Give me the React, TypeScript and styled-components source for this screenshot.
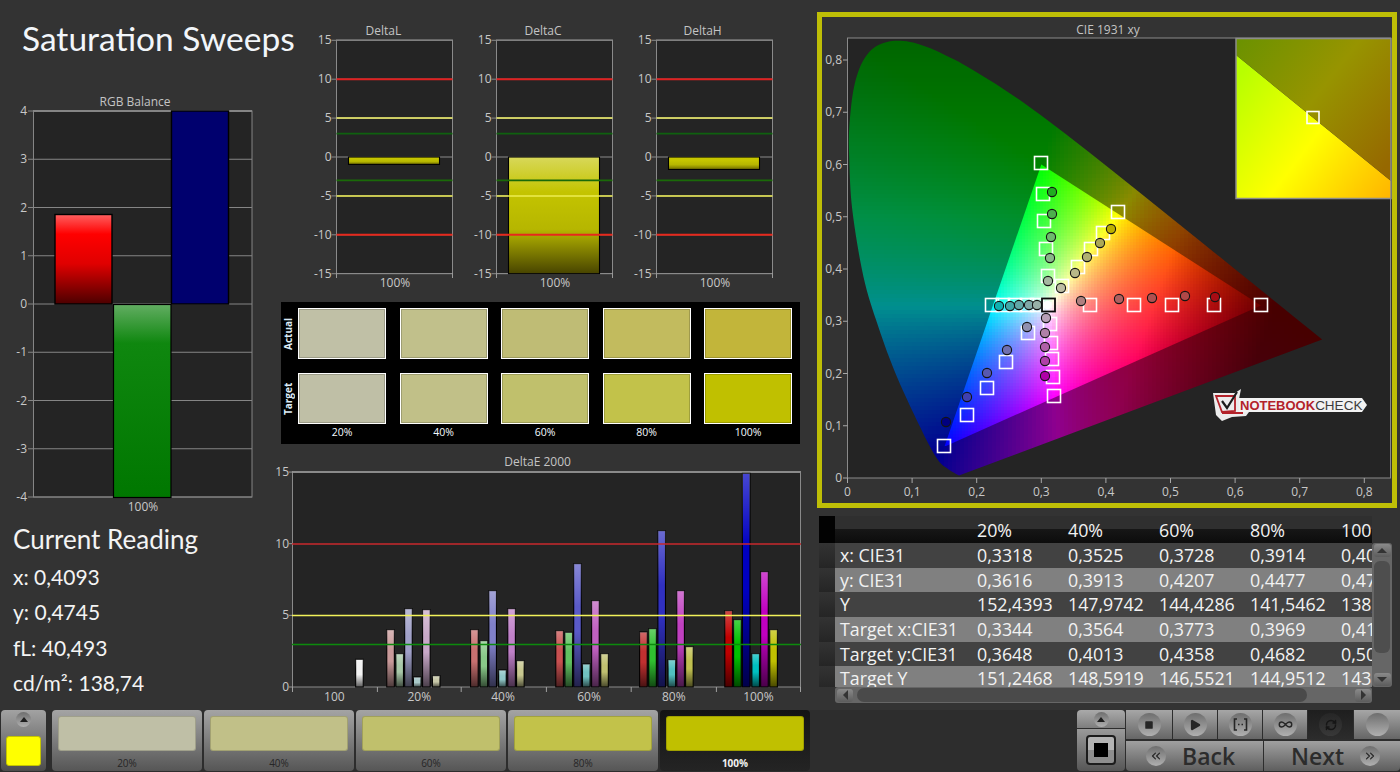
import React from 'react'
import styled, { createGlobalStyle } from 'styled-components'
import { ChevronsLeft, ChevronsRight, Infinity as InfinityIcon, Play, RefreshCw, Square } from 'lucide-react'

const GlobalStyle = createGlobalStyle`
  html, body {
    margin: 0;
    padding: 0;
    background: #333;
  }
  * {
    box-sizing: border-box;
  }
`

const Page = styled.div`
  width: 1400px;
  height: 772px;
  overflow: hidden;
  display: flex;
  flex-direction: column;
  background: #333;
  font-family: "Open Sans", "Liberation Sans", sans-serif;
`

const Main = styled.div`
  height: 710px;
  display: grid;
  grid-template-columns: 281px 536px 583px;
`

const LeftColumn = styled.div`
  display: flex;
  flex-direction: column;
`

const Title = styled.h1`
  margin: 18px 0 0 22px;
  height: 74px;
  font: 400 33.5px/40px Lato, "Liberation Sans", sans-serif;
  color: #f2f6fa;
  white-space: nowrap;
`

const ChartSvg = styled.svg<{ $w: number; $h: number }>`
  display: block;
  flex: none;
  overflow: visible;
  width: ${p => p.$w}px;
  height: ${p => p.$h}px;
`

const ChartTitle = styled.text`
  font: 12px "Open Sans", sans-serif;
  fill: #c4c4c4;
  text-anchor: middle;
`

const AxisLabel = styled.text<{ $end?: boolean }>`
  font: 12px "Open Sans", sans-serif;
  fill: #c8c8c8;
  text-anchor: ${p => (p.$end ? 'end' : 'middle')};
`

const Reading = styled.div`
  margin: 5px 0 0 13px;
  color: #f4f4f4;
  font: 400 21px/35.4px Lato, sans-serif;
`

const ReadingTitle = styled.div`
  font-size: 26px;
  line-height: 34px;
  margin-bottom: 3px;
`

const MidColumn = styled.div`
  display: flex;
  flex-direction: column;
  padding-top: 20px;
`

const DeltaRow = styled.div`
  display: flex;
  padding-left: 19px;
  height: 282px;
`

const SwatchPanel = styled.div`
  display: flex;
  width: 519px;
  height: 142px;
  background: #000;
  padding-top: 6px;
`

const SwatchLabels = styled.div`
  width: 17px;
  display: flex;
  flex-direction: column;
  gap: 14px;
`

const RowLabel = styled.div`
  width: 14px;
  height: 51px;
  writing-mode: vertical-rl;
  transform: rotate(180deg);
  text-align: center;
  line-height: 14px;
  font-size: 10px;
  font-weight: 700;
  color: #dcecf8;
`

const SwatchGrid = styled.div`
  display: grid;
  grid-template-columns: repeat(5, 88px);
  grid-template-rows: 51px 51px auto;
  column-gap: 13.5px;
  row-gap: 14px;
`

const Swatch = styled.div<{ $color: string }>`
  background: ${p => p.$color};
  border: 1px solid #fff;
  box-shadow: inset 0 0 0 1px rgba(0, 0, 0, 0.18);
`

const SwatchCaption = styled.div`
  margin-top: -13px;
  text-align: center;
  color: #f4fbff;
  font-size: 10.5px;
  font-weight: 400;
  line-height: 14px;
`

const DeltaEWrap = styled.div`
  margin-top: 8px;
`

const RightColumn = styled.div`
  display: flex;
  flex-direction: column;
  padding-top: 12px;
`

const CieFrame = styled.div`
  width: 580px;
  height: 496px;
  border: 5px solid #bebe06;
  background: #333;
`

const TableWrap = styled.div`
  margin: 8px 0 0 2px;
  display: grid;
  grid-template-columns: 553px 20px;
  grid-template-rows: 171px 16px;
  width: 573px;
`

const DataTable = styled.div`
  overflow: hidden;
  color: #f2f2f2;
  font: 400 17.8px/24.7px "Open Sans", sans-serif;
`

const Row = styled.div<{ $tone: 'head' | 'dark' | 'light' }>`
  display: grid;
  grid-template-columns: 16px 137px repeat(4, 91px) 36px;
  height: ${p => (p.$tone === 'head' ? 27 : 24.7)}px;
  background: ${p =>
    p.$tone === 'head'
      ? 'linear-gradient(#2f2f2f 0 50%, #161616 50%, #0c0c0c 100%)'
      : p.$tone === 'dark'
      ? '#424242'
      : '#808080'};
  line-height: ${p => (p.$tone === 'head' ? '29px' : 'inherit')};
`

const RowHeader = styled.div<{ $head?: boolean }>`
  background: ${p => (p.$head ? '#020202' : 'linear-gradient(#333, #252525)')};
`

const Cell = styled.div`
  padding-left: 5px;
  white-space: nowrap;
  overflow: hidden;
`

const VScroll = styled.div`
  margin-top: 27px;
  background: #666;
  border-radius: 3px;
  display: flex;
  flex-direction: column;
  align-items: center;
  padding: 1px 0;
`

const HScroll = styled.div`
  grid-column: 1;
  margin-left: 16px;
  background: #666;
  border-radius: 3px;
  display: flex;
  align-items: center;
  padding: 0 1px 0 2px;
`

const ScrollButton = styled.div<{ $dir: 'up' | 'down' | 'left' | 'right' }>`
  flex: none;
  width: ${p => (p.$dir === 'up' || p.$dir === 'down' ? '17px' : '16px')};
  height: 13px;
  border-radius: 3px;
  background: linear-gradient(#8a8a8a, #5c5c5c);
  display: flex;
  align-items: center;
  justify-content: center;
  &::after {
    content: '';
    width: 0;
    height: 0;
    border: 5px solid transparent;
    ${p =>
      p.$dir === 'up'
        ? 'border-top: 0; border-bottom-color: #333;'
        : p.$dir === 'down'
        ? 'border-bottom: 0; border-top-color: #333;'
        : p.$dir === 'left'
        ? 'border-left: 0; border-right-color: #333;'
        : 'border-right: 0; border-left-color: #333;'}
  }
`

const ScrollThumbV = styled.div`
  width: 16px;
  height: 92px;
  margin: 4px 0 auto;
  background: #4e4e4e;
  border-radius: 6px;
`

const ScrollThumbH = styled.div`
  width: 450px;
  height: 14px;
  margin: 0 auto 0 4px;
  background: #4a4a4a;
  border-radius: 7px;
`

const BottomBar = styled.div`
  height: 62px;
  display: flex;
  padding: 0 0 1px 1px;
  background: #2d2d2d;
`

const SideButton = styled.div`
  width: 45px;
  margin-right: 6px;
  border-radius: 4px;
  background: linear-gradient(#a2a2a2, #4c4c4c);
  display: flex;
  flex-direction: column;
  align-items: center;
  padding-top: 2px;
`

const RoundIcon = styled.div<{ $size?: number; $dark?: boolean }>`
  flex: none;
  width: ${p => p.$size ?? 23}px;
  height: ${p => p.$size ?? 23}px;
  border-radius: 50%;
  color: ${p => (p.$dark ? '#161616' : '#262626')};
  background: ${p =>
    p.$dark ? 'linear-gradient(#262626, #383838)' : 'linear-gradient(#6e6e6e, #b0b0b0)'};
  display: flex;
  align-items: center;
  justify-content: center;
`

const UpArrow = styled.div`
  width: 0;
  height: 0;
  border: 4.5px solid transparent;
  border-top: 0;
  border-bottom: 5px solid #1e1e1e;
`

const ColorChip = styled.div`
  width: 35px;
  height: 30px;
  margin-top: auto;
  margin-bottom: 5px;
  background: #ffff00;
  border-radius: 3px;
  border: 1px solid #c4c400;
`

const Tabs = styled.div`
  display: flex;
  gap: 2px;
`

const Tab = styled.div<{ $active?: boolean }>`
  width: 150px;
  padding: 6px 6px 0;
  border-radius: 4px;
  background: ${p => (p.$active ? 'linear-gradient(#141414, #242424)' : 'linear-gradient(#a4a4a4, #565656)')};
  display: flex;
  flex-direction: column;
`

const TabColor = styled.div<{ $color: string }>`
  height: 35px;
  border-radius: 3px;
  background: ${p => p.$color};
  border: 1px solid rgba(0, 0, 0, 0.16);
`

const TabLabel = styled.div<{ $active?: boolean }>`
  margin-top: 5px;
  text-align: center;
  font-size: 10px;
  line-height: 14px;
  font-weight: ${p => (p.$active ? 700 : 400)};
  color: ${p => (p.$active ? '#f2f2f2' : '#262626')};
`

const Controls = styled.div`
  margin-left: auto;
  display: flex;
  gap: 1px;
`

const StopStack = styled.div`
  width: 48px;
  display: flex;
  flex-direction: column;
  gap: 1px;
`

const StopTop = styled.div`
  height: 18px;
  border-radius: 4px 4px 0 0;
  background: linear-gradient(#aaa, #7e7e7e);
  display: flex;
  align-items: center;
  justify-content: center;
`

const StopBottom = styled.div`
  flex: 1;
  border-radius: 0 0 4px 4px;
  background: linear-gradient(#9a9a9a, #565656);
  display: flex;
  align-items: center;
  justify-content: center;
`

const BigStop = styled.div`
  width: 30px;
  height: 30px;
  border: 2px solid #1c1c1c;
  border-radius: 4px;
  background: linear-gradient(#b4b4b4 0 50%, #8e8e8e 50%);
  display: flex;
  align-items: center;
  justify-content: center;
  &::after {
    content: '';
    width: 14px;
    height: 14px;
    background: #000;
  }
`

const ButtonStack = styled.div`
  width: 274px;
  display: flex;
  flex-direction: column;
  gap: 2px;
`

const ToolRow = styled.div`
  height: 29px;
  display: flex;
  gap: 1px;
`

const ToolButton = styled.div<{ $on?: boolean; $w: number }>`
  width: ${p => p.$w}px;
  background: ${p => (p.$on ? 'linear-gradient(#1e1e1e, #2c2c2c)' : 'linear-gradient(#a6a6a6, #666)')};
  display: flex;
  align-items: center;
  justify-content: center;
`

const NavRow = styled.div`
  flex: 1;
  display: flex;
  gap: 1px;
`

const NavButton = styled.div<{ $next?: boolean }>`
  flex: 1;
  display: flex;
  align-items: center;
  flex-direction: ${p => (p.$next ? 'row-reverse' : 'row')};
  gap: 16px;
  padding: 0 20px;
  border-radius: ${p => (p.$next ? '0 0 4px 0' : '0 0 0 4px')};
  background: linear-gradient(#a0a0a0, #5e5e5e);
  color: #2c2c2c;
  font: 600 23px/30px "Open Sans", sans-serif;
`

// CIE xy plot scale, page pixels
const cx = (x: number) => 847.5 + 646 * x
const cy = (y: number) => 478 - 522.5 * y

// the plotted horseshoe is smoother than the tabulated locus on its left side, so it is traced from the picture
const LEFT_EDGE = [
  [959, 475.5], [948, 469], [938, 460], [923, 433], [897, 377], [878.4, 327], [863.5, 277], [852.3, 210],
  [849.3, 160], [849.3, 127], [854, 87], [863.5, 60], [878.4, 45], [900.8, 40.7], [927, 47], [960.5, 62.5],
]

const smooth = (pts: number[][]) => {
  const out: number[][] = []
  for (let i = 0; i < pts.length - 1; i++) {
    const a = pts[Math.max(i - 1, 0)]
    const b = pts[i]
    const c = pts[i + 1]
    const d = pts[Math.min(i + 2, pts.length - 1)]
    for (let t = 0; t < 1; t += 0.125) {
      const s = t * t
      const u = s * t
      const at = (k: number) =>
        0.5 * (2 * b[k] + (c[k] - a[k]) * t + (2 * a[k] - 5 * b[k] + 4 * c[k] - d[k]) * s + (3 * b[k] - a[k] - 3 * c[k] + d[k]) * u)
      out.push([(at(0) - 847.5) / 646, (478 - at(1)) / 522.5])
    }
  }
  return out
}

const LOCUS = [
  ...smooth(LEFT_EDGE),
  [0.1929, 0.7816], [0.2296, 0.7543], [0.2658, 0.7243],
  [0.3016, 0.6923], [0.3373, 0.6589], [0.3731, 0.6245], [0.4087, 0.5896], [0.4441, 0.5547], [0.4788, 0.5202],
  [0.5125, 0.4866], [0.5448, 0.4544], [0.5752, 0.4242], [0.6029, 0.3965], [0.627, 0.3725], [0.6658, 0.334],
  [0.6915, 0.3083], [0.7079, 0.292], [0.719, 0.2809], [0.73, 0.27], [0.7347, 0.2653],
]
const PRIMARIES = [[0.64, 0.33], [0.3, 0.6], [0.15, 0.06]]

const insidePoly = (x: number, y: number, poly: number[][]) => {
  let hit = false
  for (let i = 0, j = poly.length - 1; i < poly.length; j = i++) {
    const [xi, yi] = poly[i]
    const [xj, yj] = poly[j]
    if (yi > y !== yj > y && x < ((xj - xi) * (y - yi)) / (yj - yi) + xi) hit = !hit
  }
  return hit
}

const redShare = (x: number, y: number) => {
  const [[x1, y1], [x2, y2], [x3, y3]] = PRIMARIES
  return ((y2 - y3) * (x - x3) + (x3 - x2) * (y - y3)) / ((y2 - y3) * (x1 - x3) + (x3 - x2) * (y1 - y3))
}

const xyColor = (x: number, y: number, dim: number, gamma: number, fall: number) => {
  const X = x / y
  const Z = (1 - x - y) / y
  const lin = [
    3.2406 * X - 1.5372 - 0.4986 * Z,
    -0.9689 * X + 1.8758 + 0.0415 * Z,
    0.0557 * X - 0.204 + 1.057 * Z,
  ].map(v => Math.max(v, 0))
  const top = Math.max(...lin)
  const fade = 1 - fall * Math.min(1, Math.max(0, (redShare(x, y) - 0.6) / 0.45))
  const [r, g, b] = lin.map(v => Math.round(255 * Math.pow(v / top, 1 / gamma) * dim * fade))
  return `rgb(${r},${g},${b})`
}

const buildCells = (
  step: number,
  test: (x: number, y: number) => boolean,
  color: (x: number, y: number) => string
) => {
  const cells: { x: number; y: number; fill: string }[] = []
  for (let py = 38; py < 478; py += step) {
    for (let px = 848; px < 1325; px += step) {
      const x = (px + step / 2 - 847.5) / 646
      const y = (478 - py - step / 2) / 522.5
      if (y > 0.002 && test(x, y)) cells.push({ x: px, y: py, fill: color(x, y) })
    }
  }
  return cells
}

const near = (poly: number[][]) => (x: number, y: number) => {
  const d = 0.012
  return (
    insidePoly(x, y, poly) ||
    insidePoly(x + d, y, poly) ||
    insidePoly(x - d, y, poly) ||
    insidePoly(x, y + d, poly) ||
    insidePoly(x, y - d, poly)
  )
}

// the part outside the gamut gets darker towards the top of the horseshoe
const outerDim = (y: number) => 0.56 - 0.16 * Math.min(1, Math.max(0, (y - 0.5) / 0.33))

const outerCells = buildCells(4, near(LOCUS), (x, y) => xyColor(x, y, outerDim(y), 1.2, 0.5))
const innerCells = buildCells(3, near(PRIMARIES), (x, y) => xyColor(x, y, 1, 1.1, 0.65))

const toPoints = (poly: number[][]) => poly.map(([x, y]) => `${cx(x)},${cy(y)}`).join(' ')

const SQUARES = [
  [1041, 163], [1043, 194], [1044, 221], [1046, 249], [1048, 276],
  [1118, 212], [1103, 233], [1091, 249], [1078, 267], [1062, 286],
  [1261, 305], [1214, 305], [1172, 305], [1134, 305], [1090, 305],
  [992, 305], [1003, 305], [1015, 305], [1027, 305], [1037, 305],
  [944, 446], [967, 415], [987, 388], [1006, 362], [1028, 333],
  [1054, 396], [1053, 377], [1052, 359], [1051, 343], [1050, 324],
]

const DOTS: [number, number, string][] = [
  [1052, 192, '#1fae1f'], [1052, 214, '#4cb04c'], [1051, 237, '#6db86d'], [1050, 258, '#8ab88a'], [1048, 281, '#a4b8a0'],
  [1111, 229, '#bdb000'], [1100, 243, '#aca856'], [1087, 257, '#b0b070'], [1075, 273, '#b8b888'], [1061, 288, '#bebea4'],
  [1215, 297, '#a80c14'], [1185, 296, '#b04848'], [1152, 298, '#b05050'], [1119, 299, '#b06060'], [1081, 301, '#b08080'],
  [999, 306, '#10b0b0'], [1010, 306, '#40a8a8'], [1019, 305, '#60a8a8'], [1029, 305, '#80a8a8'], [1037, 305, '#98b0a8'],
  [946, 422, '#000080'], [967, 397, '#4040b0'], [987, 373, '#5858b0'], [1007, 350, '#7070b0'], [1027, 327, '#9090b0'],
  [1045, 376, '#b000a8'], [1045, 361, '#b040a8'], [1045, 347, '#b060a8'], [1045, 333, '#b080a8'], [1046, 318, '#b8a0b8'],
]

const LogoWord = styled.text`
  font: 700 13px "Liberation Sans", sans-serif;
`

const LogoTail = styled.tspan`
  font-weight: 400;
  font-size: 13.5px;
`

const Logo = () => (
  <g>
    <polygon points="1236,398 1362,398 1367,405 1362,412 1236,412" fill="#f2f2f2" />
    <polygon points="1213,393 1235,393 1241,389 1239,399 1239,412 1249,412 1246,416 1232,417 1222,421 1216,415" fill="#ececec" />
    <path d="M1216 396 H1235 V411 L1222 412 Z M1222 413 L1243 413" fill="none" stroke="#b3222a" strokeWidth={1.8} />
    <path d="M1222 401 L1227 408 L1237 392" fill="none" stroke="#1c1c1c" strokeWidth={2.2} />
    <LogoWord x={1240} y={409.6} fill="#b3222a">
      NOTEBOOK<LogoTail fill="#3c3c3c">CHECK</LogoTail>
    </LogoWord>
  </g>
)

const CieChart = () => (
  <ChartSvg $w={570} $h={486} viewBox="822 17 570 486">
    <defs>
      <clipPath id="locusClip">
        <polygon points={toPoints(LOCUS)} />
      </clipPath>
      <clipPath id="gamutClip">
        <polygon points={toPoints(PRIMARIES)} />
      </clipPath>
      <clipPath id="insetLow">
        <polygon points="1236,55 1391,181 1391,198 1236,198" />
      </clipPath>
      <clipPath id="insetHigh">
        <polygon points="1236,39 1391,39 1391,181 1236,55" />
      </clipPath>
      <linearGradient id="insetBright" gradientUnits="userSpaceOnUse" x1="1236" y1="80" x2="1391" y2="198">
        <stop offset="0" stopColor="#b8ff00" />
        <stop offset="0.5" stopColor="#ffff00" />
        <stop offset="1" stopColor="#ffb400" />
      </linearGradient>
      <linearGradient id="insetDim" gradientUnits="userSpaceOnUse" x1="1236" y1="39" x2="1391" y2="160">
        <stop offset="0" stopColor="#6a9200" />
        <stop offset="0.5" stopColor="#979400" />
        <stop offset="1" stopColor="#966800" />
      </linearGradient>
    </defs>
    <ChartTitle x={1108} y={34}>CIE 1931 xy</ChartTitle>
    <rect x={847.5} y={38} width={543} height={440} fill="#242424" stroke="#8a8a8a" strokeWidth={1} />
    <g clipPath="url(#locusClip)" shapeRendering="crispEdges">
      {outerCells.map(c => (
        <rect key={`o${c.x}-${c.y}`} x={c.x} y={c.y} width={4} height={4} fill={c.fill} />
      ))}
    </g>
    <g clipPath="url(#gamutClip)" shapeRendering="crispEdges">
      {innerCells.map(c => (
        <rect key={`i${c.x}-${c.y}`} x={c.x} y={c.y} width={3} height={3} fill={c.fill} />
      ))}
    </g>
    {[0, 0.1, 0.2, 0.3, 0.4, 0.5, 0.6, 0.7, 0.8].map(v => {
      const label = v === 0 ? '0' : v.toFixed(1).replace('.', ',')
      return (
        <g key={v}>
          <line x1={843} x2={847.5} y1={cy(v)} y2={cy(v)} stroke="#a8a8a8" />
          <line x1={cx(v)} x2={cx(v)} y1={478} y2={483} stroke="#a8a8a8" />
          <AxisLabel $end x={842} y={cy(v) + 4}>{label}</AxisLabel>
          <AxisLabel x={cx(v)} y={496}>{label}</AxisLabel>
        </g>
      )
    })}
    {SQUARES.map(([x, y]) => (
      <rect key={`${x}-${y}`} x={x - 6.5} y={y - 6.5} width={13} height={13} fill="none" stroke="#fff" strokeWidth={1.6} />
    ))}
    {DOTS.map(([x, y, fill]) => (
      <circle key={`${x}-${y}`} cx={x} cy={y} r={4.6} fill={fill} stroke="#141414" strokeWidth={1.1} />
    ))}
    <circle cx={1047.5} cy={305} r={4.2} fill="#fff" />
    <rect x={1042} y={298.5} width={13} height={13} fill="none" stroke="#0c0c0c" strokeWidth={1.8} />

    <rect x={1236} y={38.5} width={155} height={160} fill="#333" />
    <rect x={1236} y={39} width={155} height={159} fill="url(#insetBright)" clipPath="url(#insetLow)" />
    <rect x={1236} y={39} width={155} height={159} fill="url(#insetDim)" clipPath="url(#insetHigh)" />
    <rect x={1236} y={38.5} width={155} height={160} fill="none" stroke="#8c8c8c" strokeWidth={1.5} />
    <rect x={1307} y={111.5} width={12} height={12} fill="none" stroke="#fff" strokeWidth={1.6} />

    <Logo />
  </ChartSvg>
)

const RgbChart = () => (
  <ChartSvg $w={281} $h={425} viewBox="0 92 281 425">
    <defs>
      <linearGradient id="rgbRed" x1="0" x2="0" y1="0" y2="1">
        <stop offset="0" stopColor="#ff6060" />
        <stop offset="0.22" stopColor="#ff0000" />
        <stop offset="0.55" stopColor="#e00000" />
        <stop offset="1" stopColor="#4c0000" />
      </linearGradient>
      <linearGradient id="rgbGreen" x1="0" x2="0" y1="0" y2="1">
        <stop offset="0" stopColor="#62ad62" />
        <stop offset="0.2" stopColor="#0f870f" />
        <stop offset="1" stopColor="#007700" />
      </linearGradient>
    </defs>
    <ChartTitle x={135} y={106}>RGB Balance</ChartTitle>
    <rect x={33.5} y={111} width={218.5} height={386} fill="#242424" stroke="#858585" />
    <line x1={33} x2={252} y1={111} y2={111} stroke="#858585" strokeWidth={2} />
    {[4, 3, 2, 1, 0, -1, -2, -3, -4].map(v => {
      const y = 304 - v * 48.25
      return (
        <g key={v}>
          <line x1={28} x2={252} y1={y} y2={y} stroke="#858585" />
          <AxisLabel $end x={27} y={y + 4}>{v}</AxisLabel>
        </g>
      )
    })}
    <rect x={55} y={214.5} width={57} height={89.5} fill="url(#rgbRed)" stroke="#000" strokeWidth={1.4} />
    <rect x={171.5} y={111} width={57} height={193} fill="#00006e" stroke="#000" strokeWidth={1.4} />
    <rect x={113.5} y={304.5} width={57.5} height={193} fill="url(#rgbGreen)" stroke="#000" strokeWidth={1.2} />
    <AxisLabel x={143} y={511}>100%</AxisLabel>
  </ChartSvg>
)

const DeltaChart = ({ name, origin, titleX, bar }: { name: string; origin: number; titleX: number; bar: number }) => {
  const left = origin + 36.5
  const right = origin + 152.5
  const at = (v: number) => 157 - v * 7.78
  const limits: [number, string, number][] = [
    [10, '#e02020', 2],
    [5, '#f4f46a', 1.5],
    [3, '#0f610f', 1.6],
    [-3, '#1a6a08', 1.6],
    [-5, '#ecec50', 1.5],
    [-10, '#e6281c', 2],
  ]
  return (
    <ChartSvg $w={160} $h={273} viewBox={`${origin} 20 160 273`}>
      <ChartTitle x={titleX} y={35}>{name}</ChartTitle>
      <rect x={left} y={40} width={116} height={233.5} fill="#242424" stroke="#8a8a8a" />
      {[15, 10, 5, 0, -5, -10, -15].map(v => (
        <g key={v}>
          <line x1={left - 5} x2={right} y1={at(v)} y2={at(v)} stroke="#8a8a8a" />
          <AxisLabel $end x={left - 5} y={at(v) + 4}>{v}</AxisLabel>
        </g>
      ))}
      <line x1={left} x2={left} y1={273} y2={278} stroke="#9a9a9a" />
      <line x1={right} x2={right} y1={273} y2={278} stroke="#9a9a9a" />
      <rect
        x={left + 12}
        y={157}
        width={91}
        height={bar * 7.78}
        fill={`url(#deltaFill${name})`}
        stroke="#000"
        strokeWidth={1.1}
      />
      <defs>
        <linearGradient id={`deltaFill${name}`} x1="0" x2="0" y1="0" y2="1">
          <stop offset="0" stopColor={bar > 5 ? '#d8d85a' : '#c8c800'} />
          <stop offset="0.3" stopColor="#c4c400" />
          <stop offset="0.62" stopColor="#b6b600" />
          <stop offset="1" stopColor={bar > 5 ? '#484400' : '#6e6a00'} />
        </linearGradient>
      </defs>
      {limits.map(([v, color, w]) => (
        <line key={v} x1={left} x2={right} y1={at(v)} y2={at(v)} stroke={color} strokeWidth={w} />
      ))}
      <AxisLabel x={origin + 95} y={287}>100%</AxisLabel>
    </ChartSvg>
  )
}

// bar tops and centres read from the plot, one group per saturation level
const E_GROUPS: { x: number[]; tops: number[]; colors: string[] }[] = [
  { x: [235], tops: [628], colors: ['#f2f2f2'] },
  {
    x: [327, 354, 380, 406, 433, 462],
    tops: [539, 611, 476, 681, 479, 677],
    colors: ['#c99a9a', '#a8c8a8', '#a0a0c8', '#a8c8c8', '#c8a8c8', '#c8c8a8'],
  },
  {
    x: [575, 603, 629, 658, 685, 711],
    tops: [539, 572, 422, 660, 476, 632],
    colors: ['#c87070', '#88c888', '#8080c8', '#90c8c8', '#c080c8', '#c8c890'],
  },
  {
    x: [827, 854, 880, 906, 933, 960],
    tops: [542, 547, 341, 642, 452, 611],
    colors: ['#c85050', '#60c060', '#5a5ac8', '#70c0c0', '#c060c0', '#c0c070'],
  },
  {
    x: [1075, 1102, 1129, 1159, 1185, 1211],
    tops: [546, 536, 242, 629, 422, 590],
    colors: ['#c03030', '#30c030', '#3030c0', '#50c0c0', '#c040c0', '#c0c050'],
  },
  {
    x: [1327, 1353, 1379, 1407, 1433, 1460],
    tops: [482, 509, 70, 611, 365, 539],
    colors: ['#c00000', '#00c000', '#0000c0', '#00c0c0', '#c000c0', '#c0c000'],
  },
]

const DeltaEChart = () => (
  <ChartSvg $w={536} $h={253} viewBox="281 452 536 253">
    <defs>
      <linearGradient id="barSheen" x1="0" x2="0" y1="0" y2="1">
        <stop offset="0" stopColor="#fff" stopOpacity="0.28" />
        <stop offset="0.35" stopColor="#fff" stopOpacity="0" />
        <stop offset="0.55" stopColor="#000" stopOpacity="0" />
        <stop offset="1" stopColor="#000" stopOpacity="0.62" />
      </linearGradient>
    </defs>
    <ChartTitle x={537.6} y={466}>DeltaE 2000</ChartTitle>
    <rect x={292.5} y={472} width={508} height={215} fill="#242424" stroke="#8a8a8a" />
    <line x1={292} x2={801} y1={472} y2={472} stroke="#8a8a8a" strokeWidth={2} />
    {[15, 10, 5, 0].map(v => {
      const y = 687 - v * 14.33
      return (
        <g key={v}>
          <line x1={289} x2={293} y1={y} y2={y} stroke="#9a9a9a" />
          <AxisLabel $end x={289} y={y + 4}>{v}</AxisLabel>
        </g>
      )
    })}
    {[292.5, 377.4, 461.2, 546.4, 631.2, 716.4, 800.5].map(x => (
      <line key={x} x1={x} x2={x} y1={687} y2={692} stroke="#a0a0a0" />
    ))}
    {E_GROUPS.map(group =>
      group.x.map((c, i) => {
        const bx = 280 + c / 2.958 - 3.8
        const top = 450 + group.tops[i] / 3
        return (
          <g key={c}>
            <rect x={bx} y={top} width={7.6} height={687 - top} fill={group.colors[i]} stroke="#000" strokeWidth={1.1} />
            <rect x={bx} y={top} width={7.6} height={687 - top} fill="url(#barSheen)" />
          </g>
        )
      })
    )}
    <line x1={292} x2={801} y1={544} y2={544} stroke="#c8282c" strokeWidth={1.6} />
    <line x1={292} x2={801} y1={615.5} y2={615.5} stroke="#f2f25a" strokeWidth={1.5} />
    <line x1={292} x2={801} y1={644.5} y2={644.5} stroke="#0c8a0c" strokeWidth={1.3} />
    {[[334.4, '100'], [419.3, '20%'], [503, '40%'], [589, '60%'], [673.8, '80%'], [758.4, '100%']].map(([x, t]) => (
      <AxisLabel key={t} x={x} y={701}>{t}</AxisLabel>
    ))}
  </ChartSvg>
)

const ACTUAL = ['#c0c0a6', '#c1c08b', '#bfbc75', '#c2bb5e', '#c2b53a']
const TARGET = ['#bfbfa6', '#c1c088', '#c0c06c', '#c2c24a', '#c0c000']
const LEVELS = ['20%', '40%', '60%', '80%', '100%']

const ROWS: { tone: 'dark' | 'light'; cells: string[] }[] = [
  { tone: 'dark', cells: ['x: CIE31', '0,3318', '0,3525', '0,3728', '0,3914', '0,4093'] },
  { tone: 'light', cells: ['y: CIE31', '0,3616', '0,3913', '0,4207', '0,4477', '0,4745'] },
  { tone: 'dark', cells: ['Y', '152,4393', '147,9742', '144,4286', '141,5462', '138,74'] },
  { tone: 'light', cells: ['Target x:CIE31', '0,3344', '0,3564', '0,3773', '0,3969', '0,41'] },
  { tone: 'dark', cells: ['Target y:CIE31', '0,3648', '0,4013', '0,4358', '0,4682', '0,50'] },
  { tone: 'light', cells: ['Target Y', '151,2468', '148,5919', '146,5521', '144,9512', '143'] },
]

const Brackets = () => (
  <svg width="15" height="13" viewBox="0 0 15 13" fill="none" stroke="#262626" strokeWidth="1.6">
    <path d="M4 1H1.5V12H4M11 1H13.5V12H11" />
    <path d="M5 6.5H6.5M8.5 6.5H10" />
  </svg>
)

const App = () => (
  <Page>
    <GlobalStyle />
    <Main>
      <LeftColumn>
        <Title>Saturation Sweeps</Title>
        <RgbChart />
        <Reading>
          <ReadingTitle>Current Reading</ReadingTitle>
          <div>x: 0,4093</div>
          <div>y: 0,4745</div>
          <div>fL: 40,493</div>
          <div>cd/m²: 138,74</div>
        </Reading>
      </LeftColumn>

      <MidColumn>
        <DeltaRow>
          <DeltaChart name="DeltaL" origin={300} titleX={383.4} bar={0.95} />
          <DeltaChart name="DeltaC" origin={460} titleX={543} bar={15} />
          <DeltaChart name="DeltaH" origin={620} titleX={702.6} bar={1.6} />
        </DeltaRow>
        <SwatchPanel>
          <SwatchLabels>
            <RowLabel>Actual</RowLabel>
            <RowLabel>Target</RowLabel>
          </SwatchLabels>
          <SwatchGrid>
            {ACTUAL.map(c => (
              <Swatch key={c} $color={c} />
            ))}
            {TARGET.map(c => (
              <Swatch key={c} $color={c} />
            ))}
            {LEVELS.map(l => (
              <SwatchCaption key={l}>{l}</SwatchCaption>
            ))}
          </SwatchGrid>
        </SwatchPanel>
        <DeltaEWrap>
          <DeltaEChart />
        </DeltaEWrap>
      </MidColumn>

      <RightColumn>
        <CieFrame>
          <CieChart />
        </CieFrame>
        <TableWrap>
          <DataTable>
            <Row $tone="head">
              <RowHeader $head />
              <Cell />
              {LEVELS.map(l => (
                <Cell key={l}>{l}</Cell>
              ))}
            </Row>
            {ROWS.map(row => (
              <Row key={row.cells[0]} $tone={row.tone}>
                <RowHeader />
                {row.cells.map((c, i) => (
                  <Cell key={i}>{c}</Cell>
                ))}
              </Row>
            ))}
          </DataTable>
          <VScroll>
            <ScrollButton $dir="up" />
            <ScrollThumbV />
            <ScrollButton $dir="down" />
          </VScroll>
          <HScroll>
            <ScrollButton $dir="left" />
            <ScrollThumbH />
            <ScrollButton $dir="right" />
          </HScroll>
        </TableWrap>
      </RightColumn>
    </Main>

    <BottomBar>
      <SideButton>
        <RoundIcon $size={15}>
          <UpArrow />
        </RoundIcon>
        <ColorChip />
      </SideButton>
      <Tabs>
        {[
          ['20%', '#bfbfa6'],
          ['40%', '#c1c088'],
          ['60%', '#c0c06c'],
          ['80%', '#c2c24a'],
        ].map(([label, color]) => (
          <Tab key={label}>
            <TabColor $color={color} />
            <TabLabel>{label}</TabLabel>
          </Tab>
        ))}
        <Tab $active>
          <TabColor $color="#c0c000" />
          <TabLabel $active>100%</TabLabel>
        </Tab>
      </Tabs>
      <Controls>
        <StopStack>
          <StopTop>
            <RoundIcon $size={15}>
              <UpArrow />
            </RoundIcon>
          </StopTop>
          <StopBottom>
            <BigStop />
          </StopBottom>
        </StopStack>
        <ButtonStack>
          <ToolRow>
            <ToolButton $w={46}>
              <RoundIcon>
                <Square size={10} fill="#262626" strokeWidth={0} />
              </RoundIcon>
            </ToolButton>
            <ToolButton $w={44}>
              <RoundIcon>
                <Play size={14} fill="#262626" strokeWidth={0} />
              </RoundIcon>
            </ToolButton>
            <ToolButton $w={44}>
              <RoundIcon>
                <Brackets />
              </RoundIcon>
            </ToolButton>
            <ToolButton $w={44}>
              <RoundIcon>
                <InfinityIcon size={15} strokeWidth={2.2} />
              </RoundIcon>
            </ToolButton>
            <ToolButton $w={45} $on>
              <RoundIcon $dark>
                <RefreshCw size={12} strokeWidth={3} />
              </RoundIcon>
            </ToolButton>
            <ToolButton $w={46}>
              <RoundIcon />
            </ToolButton>
          </ToolRow>
          <NavRow>
            <NavButton>
              <RoundIcon $size={20}>
                <ChevronsLeft size={14} strokeWidth={2} />
              </RoundIcon>
              Back
            </NavButton>
            <NavButton $next>
              <RoundIcon $size={20}>
                <ChevronsRight size={14} strokeWidth={2} />
              </RoundIcon>
              Next
            </NavButton>
          </NavRow>
        </ButtonStack>
      </Controls>
    </BottomBar>
  </Page>
)

export default App
